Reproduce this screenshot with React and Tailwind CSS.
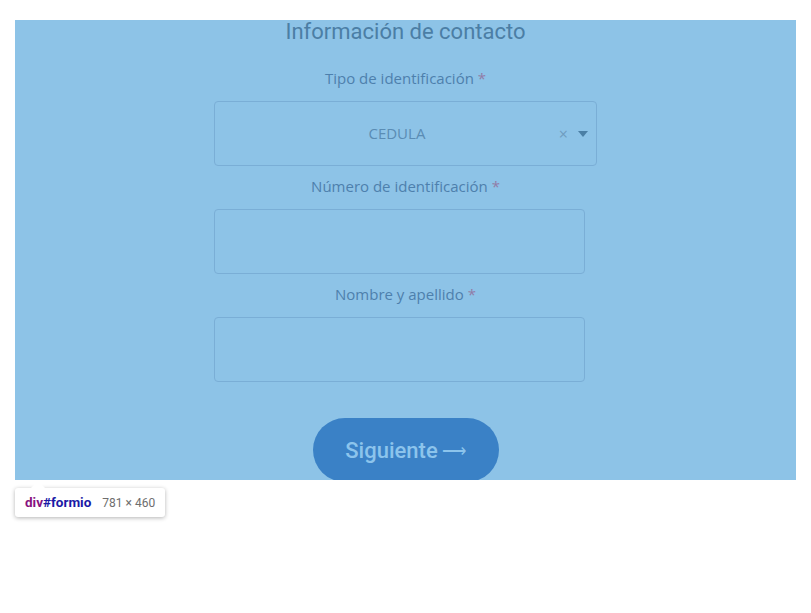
import React from 'react'

function Field({ label, children }) {
    return (
        <div className="flex flex-col">
            <label className="mt-[9px] mb-[12px] text-center text-[15px] leading-[22px] text-[#4d80ad]">
                {label} <span className="text-[#927ca6]">*</span>
            </label>
            {children}
        </div>
    )
}

export default function App() {
    return (
        <div className="w-[811px] h-[613px] bg-white pt-[20px]" style={{ fontFamily: '"Open Sans", "Noto Sans", sans-serif' }}>
            <div className="ml-[15px] w-[781px] h-[460px] bg-[#8dc3e7] overflow-hidden flex flex-col items-center">
                <h2 className="mt-0 text-[22px] leading-[24px] text-[#4b7ea5]" style={{ fontFamily: 'Roboto, sans-serif' }}>
                    Información de contacto
                </h2>

                <div className="w-[383px] mt-[14px]">
                    <Field label="Tipo de identificación">
                        <div className="h-[65px] w-[383px] rounded-[4px] border border-[#7aaed6] flex items-center">
                            <div className="flex-1 text-center text-[15px] text-[#5a8cb4] pl-[20px]">CEDULA</div>
                            <span className="text-[16px] text-[#6f9cc0] mr-[10px]">×</span>
                            <svg width="10" height="6" viewBox="0 0 10 6" className="mr-[8px]">
                                <path d="M0 0h10L5 6z" fill="#4b7fa5" />
                            </svg>
                        </div>
                    </Field>

                    <Field label="Número de identificación">
                        <div className="h-[65px] w-[371px] rounded-[4px] border border-[#7aaed6]" />
                    </Field>

                    <Field label="Nombre y apellido">
                        <div className="h-[65px] w-[371px] rounded-[4px] border border-[#7aaed6]" />
                    </Field>
                </div>

                <button
                    className="mt-[36px] h-[64px] w-[186px] shrink-0 rounded-full bg-[#3a81c6] text-[22px] font-medium text-[#8cc4ec] flex items-center justify-center gap-[4px]"
                    style={{ fontFamily: 'Roboto, sans-serif' }}
                >
                    Siguiente <span className="mt-[3px] text-[17px] font-normal">⟶</span>
                </button>
            </div>

            <div className="relative ml-[15px] mt-[8px] inline-flex items-center h-[29px] px-[10px] bg-white rounded-[3px] shadow-[0_1px_4px_rgba(0,0,0,0.3)]" style={{ fontFamily: 'Roboto, "Liberation Sans", sans-serif' }}>
                <span className="absolute -top-[7px] left-[15px] w-0 h-0 border-l-[8px] border-r-[8px] border-b-[8px] border-l-transparent border-r-transparent border-b-white" />
                <span className="text-[13.5px] font-bold text-[#881280]">div</span>
                <span className="text-[13.5px] font-bold text-[#1a1aa6]">#formio</span>
                <span className="ml-[11px] text-[12px] text-[#6e6e6e]">781 × 460</span>
            </div>
        </div>
    )
}
